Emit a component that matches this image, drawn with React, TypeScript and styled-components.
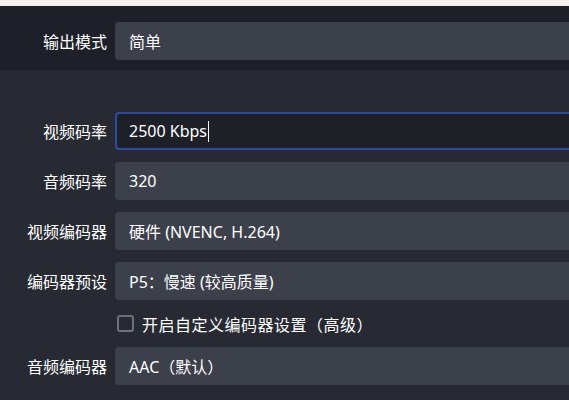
import React from "react";
import styled, { createGlobalStyle } from "styled-components";

const Global = createGlobalStyle`
  html, body { margin: 0; padding: 0; background: #272a33; overflow: hidden; }
  body { font-family: "Noto Sans", "Noto Sans CJK SC", sans-serif; color: #ffffff; }
  * { box-sizing: border-box; }
`;

const Page = styled.div`
  width: 100%;
  height: 400px;
  display: flex;
  flex-direction: column;
  background: #272a33;
`;

const TopStrip = styled.div`
  height: 6px;
  background: #f5f2eb;
`;

const ModePanel = styled.div`
  background: #1e2029;
  padding: 16px 0 10px;
`;

const Form = styled.div`
  display: grid;
  grid-template-columns: 107px 1fr;
  column-gap: 8px;
  row-gap: 12px;
  align-items: center;
`;

const MainForm = styled(Form)`
  padding-top: 42px;
`;

const Label = styled.div`
  text-align: right;
  font-family: "Noto Sans CJK SC", sans-serif;
  font-size: 16px;
  line-height: 20px;
  color: #ffffff;
`;

const Field = styled.div<{ $focused?: boolean }>`
  height: 38px;
  border-radius: 4px 0 0 4px;
  background: ${(p) => (p.$focused ? "#1e2028" : "#3c404b")};
  border: ${(p) => (p.$focused ? "2px solid #2b4aa3" : "none")};
  border-right: none;
  padding-left: ${(p) => (p.$focused ? "12px" : "14px")};
  display: flex;
  align-items: center;
  font-family: "Noto Sans", "Noto Sans CJK SC", sans-serif;
  font-size: 16px;
  color: #ffffff;
  white-space: nowrap;
  overflow: hidden;
`;

const Caret = styled.span`
  display: inline-block;
  width: 1px;
  height: 21px;
  background: #ffffff;
  margin-left: 1px;
`;

const CheckRow = styled.label`
  grid-column: 2;
  height: 23px;
  display: flex;
  align-items: center;
  gap: 8px;
  padding-left: 2px;
  font-family: "Noto Sans CJK SC", sans-serif;
  font-size: 16px;
  letter-spacing: 0.5px;
  color: #ffffff;
`;

const Box = styled.span`
  width: 17px;
  height: 17px;
  border: 2px solid #6f717a;
  border-radius: 3px;
  background: #272a33;
`;

export default function App() {
  return (
    <>
      <Global />
      <Page>
        <TopStrip />
        <ModePanel>
          <Form>
            <Label>输出模式</Label>
            <Field>简单</Field>
          </Form>
        </ModePanel>
        <MainForm>
          <Label>视频码率</Label>
          <Field $focused>
            2500 Kbps
            <Caret />
          </Field>
          <Label>音频码率</Label>
          <Field>320</Field>
          <Label>视频编码器</Label>
          <Field>硬件 (NVENC, H.264)</Field>
          <Label>编码器预设</Label>
          <Field>P5：慢速 (较高质量)</Field>
          <CheckRow>
            <Box />
            开启自定义编码器设置（高级）
          </CheckRow>
          <Label>音频编码器</Label>
          <Field>AAC（默认）</Field>
        </MainForm>
      </Page>
    </>
  );
}
